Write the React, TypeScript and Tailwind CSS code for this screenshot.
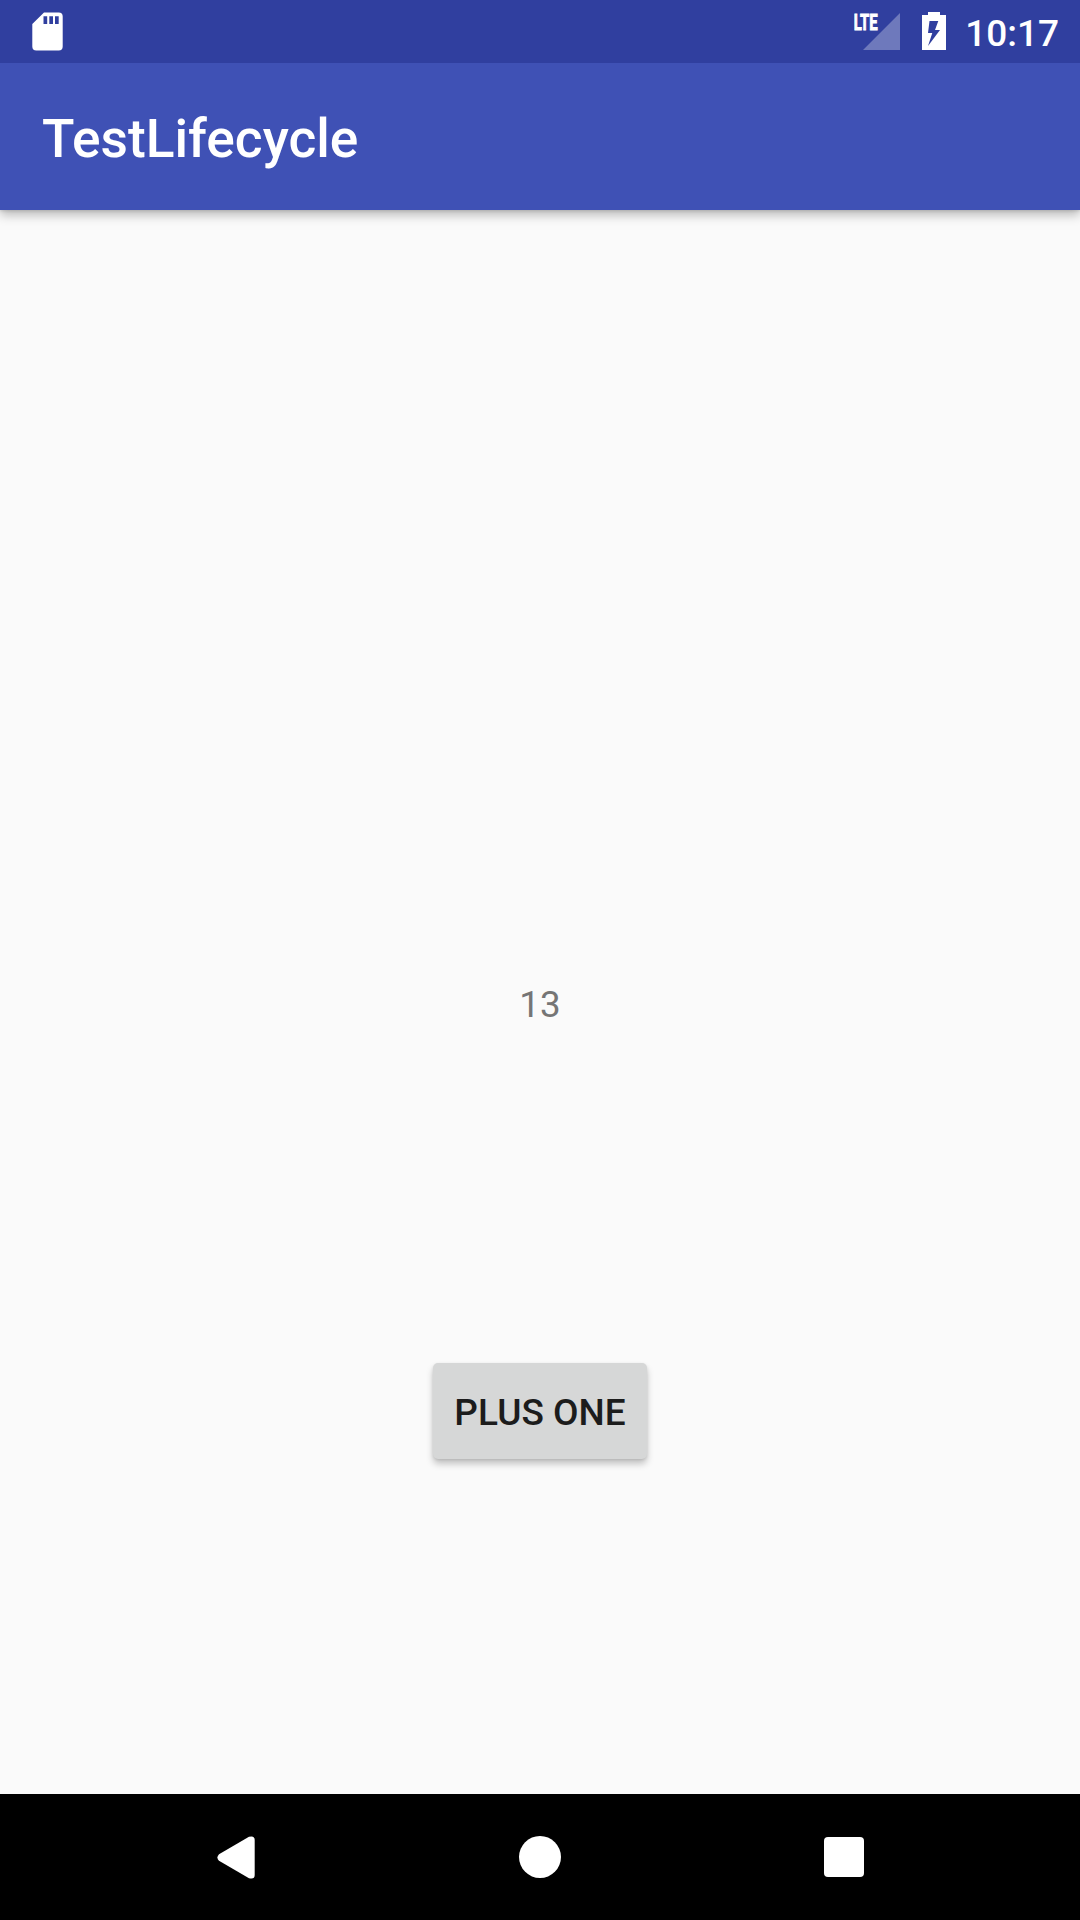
import { useState } from "react";

function StatusBar() {
  return (
    <div className="relative z-10 flex h-[63px] w-full shrink-0 items-start bg-[#303f9f] text-white">
      <svg className="ml-8 mt-3" width="31" height="39" viewBox="0 0 31 39">
        <path
          fill="white"
          fillRule="evenodd"
          d="M12 .5H26.7a4 4 0 0 1 4 4V34.5a4 4 0 0 1-4 4H4.3a4 4 0 0 1-4-4V12ZM11.5 4.3v7.7h3.7V4.3ZM17.3 4.3v7.7H21V4.3ZM23 4.3v7.7h3.7V4.3Z"
        />
      </svg>
      <svg className="ml-auto" width="48" height="51" viewBox="0 0 48 51">
        <path fill="white" fillOpacity=".3" d="M46 13V50H9Z" />
        <text
          x="-0.5"
          y="29.7"
          fill="white"
          stroke="white"
          strokeWidth=".9"
          fontFamily="Roboto, sans-serif"
          fontWeight="700"
          fontSize="22.5"
          transform="scale(.66 1)"
        >
          LTE
        </text>
      </svg>
      <svg className="ml-[20px] mt-3" width="24" height="38" viewBox="0 0 24 38">
        <path
          fill="white"
          fillRule="evenodd"
          d="M6 0H18V3H24V38H0V3H6ZM7.5 9L6 21H10.3L6 34L18 18H13L16.3 9Z"
        />
      </svg>
      <span className="ml-[19px] mr-[21px] mt-[12px] text-[37px] leading-[43px] font-medium">10:17</span>
    </div>
  );
}

function NavigationBar() {
  return (
    <div className="flex h-[126px] w-full shrink-0 items-center justify-between bg-black pr-[216px] pl-[217px]">
      <svg width="38" height="43" viewBox="0 0 38 43">
        <path fill="white" d="M2 18.2L32 .8Q37.7-.8 37.7 4V39Q37.7 43.8 32 42.2L2 24.8Q-1.2 21.5 2 18.2Z" />
      </svg>
      <div className="size-[42px] rounded-full bg-white" />
      <div className="size-10 rounded-[4px] bg-white" />
    </div>
  );
}

export default function App() {
  const [count, setCount] = useState(13);
  return (
    <div className="flex h-[1920px] w-[1080px] flex-col overflow-hidden bg-[#fafafa] font-['Roboto',sans-serif]">
      <StatusBar />
      <header className="flex h-[147px] shrink-0 items-center bg-[#3f51b5] pt-[6px] pl-[42px] shadow-[0_5px_10px_rgba(0,0,0,0.26),0_1px_3px_rgba(0,0,0,0.12)]">
        <h1 className="text-[53.3px] leading-[63px] font-medium text-white">TestLifecycle</h1>
      </header>
      <main className="flex flex-1 flex-col items-center pt-[773px]">
        <span className="text-[36.75px] leading-[44px] text-[#757575]">{count}</span>
        <button
          onClick={() => setCount(count + 1)}
          className="mt-[336px] flex h-[96px] w-[214px] items-center justify-center rounded-[5px] bg-[#d6d7d7] pt-[4px] text-[37px] leading-[44px] font-medium text-[#1c1c1c] shadow-[0_5px_7px_rgba(0,0,0,0.22),0_1px_3px_rgba(0,0,0,0.1)]"
        >
          PLUS ONE
        </button>
      </main>
      <NavigationBar />
    </div>
  );
}
